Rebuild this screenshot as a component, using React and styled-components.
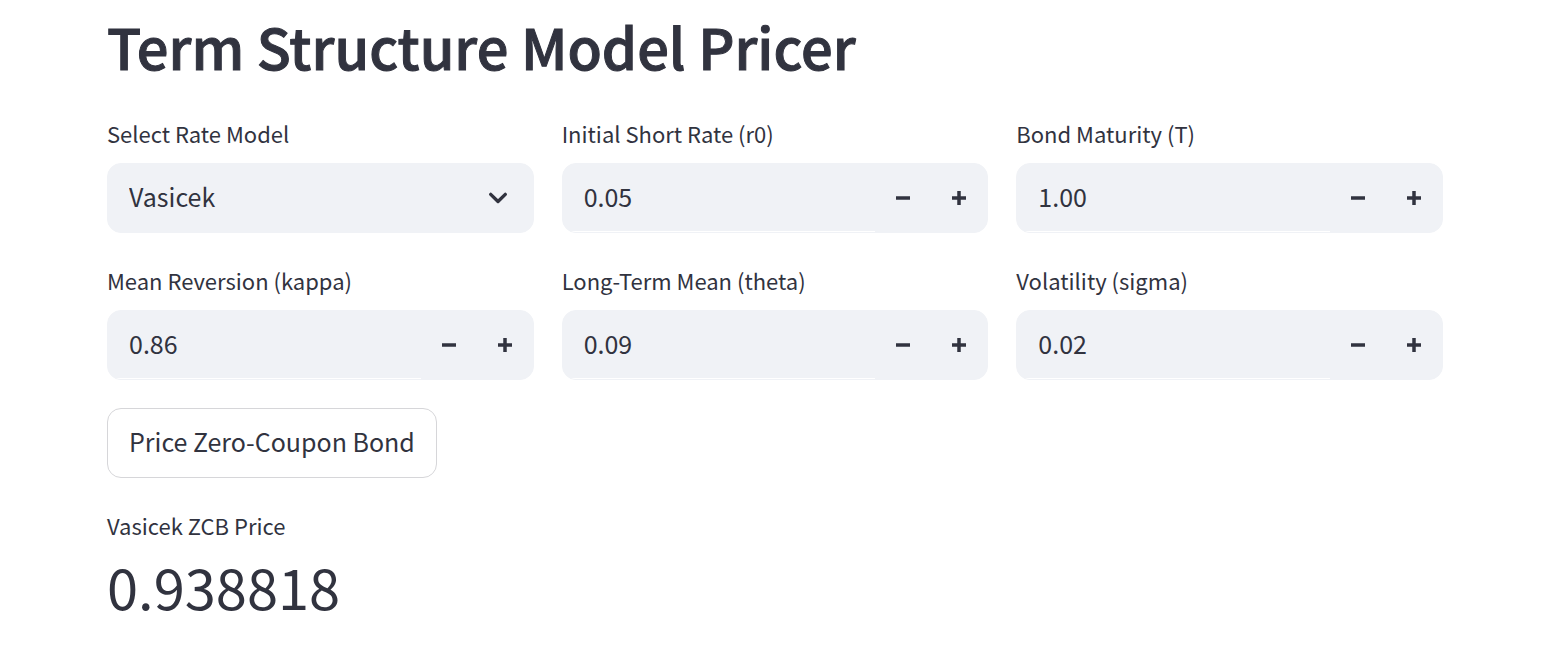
import React, { useId, useState } from "react";
import styled, { createGlobalStyle } from "styled-components";

const GlobalStyle = createGlobalStyle`
  *, *::before, *::after { box-sizing: border-box; }
  body {
    margin: 0;
    background: #ffffff;
    color: #31333f;
    font-family: "Noto Sans CJK SC", "Noto Sans", sans-serif;
  }
  button, input, select { font: inherit; color: inherit; }
`;

const Page = styled.main`
  padding: 14px 120px 40px 107px;
`;

const Title = styled.h1`
  margin: 0;
  font-size: 56px;
  line-height: 64px;
  font-weight: 500;
  -webkit-text-stroke: 1px currentColor;
`;

const Fields = styled.div`
  display: grid;
  grid-template-columns: repeat(3, 1fr);
  gap: 28px;
  margin: 36px 0 28px;
`;

const Field = styled.div`
  display: flex;
  flex-direction: column;
  gap: 10px;
  min-width: 0;
`;

const Label = styled.label`
  font-size: 22px;
  line-height: 39px;
`;

const Control = styled.div`
  position: relative;
  display: flex;
  height: 70px;
  border: 1px solid #f0f2f6;
  border-radius: 14px;
  background: #f0f2f6;
  overflow: hidden;
`;

const Select = styled.select`
  flex: 1;
  min-width: 0;
  padding: 0 56px 4px 21px;
  border: 0;
  background: transparent;
  appearance: none;
  font-size: 25px;
`;

const Chevron = styled.svg`
  position: absolute;
  top: 20px;
  right: 21px;
  width: 28px;
  height: 28px;
  fill: none;
  stroke: currentColor;
  stroke-width: 3.4;
  stroke-linecap: round;
  stroke-linejoin: round;
  pointer-events: none;
`;

const NumberInput = styled.input`
  flex: 1;
  min-width: 0;
  padding: 0 21px 3px;
  border: 0;
  border-bottom: 1px solid #ffffff;
  background: transparent;
  font-size: 25px;
`;

const StepButton = styled.button`
  display: flex;
  align-items: center;
  justify-content: center;
  width: 56px;
  padding: 0;
  border: 0;
  background: transparent;
`;

const PriceButton = styled.button`
  height: 70px;
  padding: 0 21px 4px;
  border: 1px solid #d6d6d9;
  border-radius: 14px;
  background: #ffffff;
  font-size: 25px;
`;

const Metric = styled.section`
  margin-top: 28px;
`;

const MetricLabel = styled.div`
  font-size: 22px;
  line-height: 39px;
`;

const MetricValue = styled.div`
  font-size: 56px;
  line-height: 82px;
`;

function NumberField({ label, initial }) {
  const id = useId();
  const [value, setValue] = useState(initial);
  const step = (delta) => setValue((v) => (Number(v) + delta).toFixed(2));
  return (
    <Field>
      <Label htmlFor={id}>{label}</Label>
      <Control>
        <NumberInput id={id} inputMode="decimal" value={value} onChange={(e) => setValue(e.target.value)} />
        <StepButton type="button" aria-label={`Decrease ${label}`} onClick={() => step(-0.01)}>
          <svg width="28" height="28" viewBox="0 0 8 8" fill="currentColor"><path d="M2 3.5v1h4v-1z" /></svg>
        </StepButton>
        <StepButton type="button" aria-label={`Increase ${label}`} onClick={() => step(0.01)}>
          <svg width="28" height="28" viewBox="0 0 8 8" fill="currentColor"><path d="M3.5 2v1.5H2v1h1.5V6h1V4.5H6v-1H4.5V2z" /></svg>
        </StepButton>
      </Control>
    </Field>
  );
}

export default function App() {
  return (
    <Page>
      <GlobalStyle />
      <Title>Term Structure Model Pricer</Title>
      <Fields>
        <Field>
          <Label htmlFor="model">Select Rate Model</Label>
          <Control>
            <Select id="model"><option>Vasicek</option></Select>
            <Chevron viewBox="0 0 28 28" aria-hidden="true"><path d="M6.7 10.4 14 17.5l7.3-7.1" /></Chevron>
          </Control>
        </Field>
        <NumberField label="Initial Short Rate (r0)" initial="0.05" />
        <NumberField label="Bond Maturity (T)" initial="1.00" />
        <NumberField label="Mean Reversion (kappa)" initial="0.86" />
        <NumberField label="Long-Term Mean (theta)" initial="0.09" />
        <NumberField label="Volatility (sigma)" initial="0.02" />
      </Fields>
      <PriceButton type="button">Price Zero-Coupon Bond</PriceButton>
      <Metric>
        <MetricLabel>Vasicek ZCB Price</MetricLabel>
        <MetricValue>0.938818</MetricValue>
      </Metric>
    </Page>
  );
}
